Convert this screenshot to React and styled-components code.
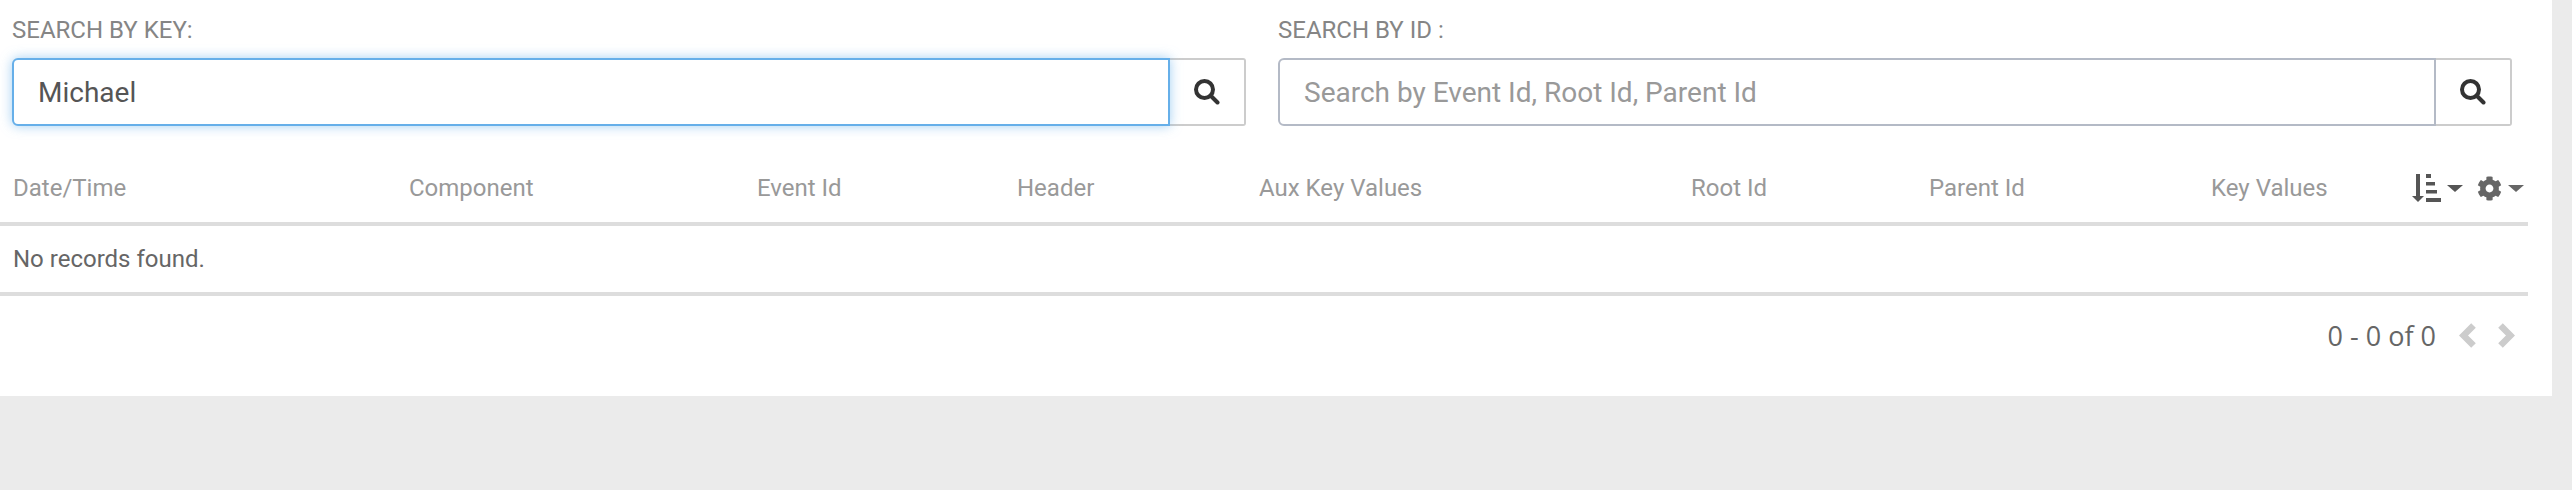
import React from 'react';
import styled, { createGlobalStyle } from 'styled-components';
import { FaCog } from 'react-icons/fa';

const GlobalStyle = createGlobalStyle`
    html, body {
        margin: 0;
        padding: 0;
        height: 490px;
        overflow: hidden;
        background-color: #ebebeb;
        font-family: Roboto, "Liberation Sans", sans-serif;
    }
`;

const Panel = styled.div`
    width: 2552px;
    height: 396px;
    background-color: #fff;
    box-sizing: border-box;
    padding-top: 17px;
`;

const SearchRow = styled.div`
    display: flex;
    gap: 32px;
    padding-left: 12px;
`;

const SearchBlock = styled.div`
    width: 1234px;
`;

const SearchLabel = styled.div`
    font-size: 24px;
    line-height: 26px;
    color: #858585;
    margin-bottom: 15px;
`;

const InputGroup = styled.div`
    display: flex;
    height: 68px;
`;

const SearchInput = styled.input`
    flex: 1;
    min-width: 0;
    box-sizing: border-box;
    height: 100%;
    padding: 0 24px;
    font-family: inherit;
    font-size: 28px;
    color: #555;
    background: #fff;
    outline: none;
    border: 2px solid ${(p) => (p.$focused ? '#66afe9' : '#b4bac6')};
    border-radius: 6px 0 0 6px;
    box-shadow: ${(p) => (p.$focused ? '0 0 12px rgba(102, 175, 233, 0.6)' : 'none')};
    position: relative;
    z-index: 1;
    &::placeholder {
        color: #999;
        opacity: 1;
    }
`;

const SearchButton = styled.button`
    width: 76px;
    height: 100%;
    box-sizing: border-box;
    background: #fff;
    border: 2px solid #ccc;
    border-left: none;
    border-radius: 0 3px 3px 0;
    padding: 0;
    color: #333;
    display: flex;
    align-items: center;
    justify-content: center;
`;

const TableWrap = styled.div`
    width: 2528px;
    margin-top: 40px;
`;

const HeaderRow = styled.div`
    display: grid;
    grid-template-columns: 396px 348px 260px 242px 432px 238px 282px 201px 1fr;
    height: 60px;
    padding: 0 0 12px 13px;
    box-sizing: border-box;
    border-bottom: 4px solid #ddd;
    align-items: center;
`;

const HeaderCell = styled.div`
    font-size: 24px;
    color: #999;
`;

const HeaderTools = styled.div`
    display: flex;
    align-items: center;
    gap: 14px;
    color: #555;
`;

const ToolGroup = styled.span`
    display: flex;
    align-items: center;
    gap: 6px;
    color: ${(p) => p.$color};
`;

const Caret = styled.span`
    width: 0;
    height: 0;
    border-left: 8px solid transparent;
    border-right: 8px solid transparent;
    border-top: 7px solid currentColor;
`;

const EmptyRow = styled.div`
    height: 70px;
    box-sizing: border-box;
    padding-left: 13px;
    display: flex;
    align-items: center;
    font-size: 24px;
    color: #666;
    border-bottom: 4px solid #ddd;
`;

const Pager = styled.div`
    display: flex;
    justify-content: flex-end;
    align-items: center;
    gap: 23px;
    height: 78px;
    padding-right: 13px;
    color: #666;
    font-family: "Open Sans", Roboto, sans-serif;
    font-size: 27px;
`;

const PagerArrows = styled.span`
    display: flex;
    gap: 22px;
    align-items: center;
`;

const SearchIcon = () => (
    <svg width="26" height="26" viewBox="0 0 26 26" fill="none" stroke="#333" strokeWidth="4">
        <circle cx="10.5" cy="10.5" r="8.5" />
        <line x1="17" y1="17" x2="23.5" y2="23.5" strokeLinecap="round" />
    </svg>
);

const SortIcon = () => (
    <svg width="29" height="28" viewBox="0 0 29 28" fill="currentColor">
        <rect x="4" y="0" width="4" height="24" />
        <polygon points="0,22 12,22 6,28" />
        <rect x="14" y="0" width="5" height="4" />
        <rect x="14" y="8" width="9" height="3.5" />
        <rect x="14" y="16" width="11" height="3.5" />
        <rect x="14" y="24" width="15" height="4" />
    </svg>
);

const Chevron = ({ points }) => (
    <svg width="17" height="25" viewBox="0 0 17 25" fill="none" stroke="#ccc" strokeWidth="6.5">
        <polyline points={points} />
    </svg>
);

const columns = ['Date/Time', 'Component', 'Event Id', 'Header', 'Aux Key Values', 'Root Id', 'Parent Id', 'Key Values'];

const App = () => {
    return (
        <Panel>
            <GlobalStyle />
            <SearchRow>
                <SearchBlock>
                    <SearchLabel>SEARCH BY KEY:</SearchLabel>
                    <InputGroup>
                        <SearchInput $focused defaultValue="Michael" />
                        <SearchButton><SearchIcon /></SearchButton>
                    </InputGroup>
                </SearchBlock>
                <SearchBlock>
                    <SearchLabel>SEARCH BY ID :</SearchLabel>
                    <InputGroup>
                        <SearchInput placeholder="Search by Event Id, Root Id, Parent Id" />
                        <SearchButton><SearchIcon /></SearchButton>
                    </InputGroup>
                </SearchBlock>
            </SearchRow>
            <TableWrap>
                <HeaderRow>
                    {columns.map((name) => (
                        <HeaderCell key={name}>{name}</HeaderCell>
                    ))}
                    <HeaderTools>
                        <ToolGroup $color="#555"><SortIcon /><Caret /></ToolGroup>
                        <ToolGroup $color="#666"><FaCog size={25} /><Caret /></ToolGroup>
                    </HeaderTools>
                </HeaderRow>
                <EmptyRow>No records found.</EmptyRow>
                <Pager>
                    0 - 0 of 0
                    <PagerArrows>
                        <Chevron points="14.5,2.5 4.5,12.5 14.5,22.5" />
                        <Chevron points="2.5,2.5 12.5,12.5 2.5,22.5" />
                    </PagerArrows>
                </Pager>
            </TableWrap>
        </Panel>
    );
};

export default App;
